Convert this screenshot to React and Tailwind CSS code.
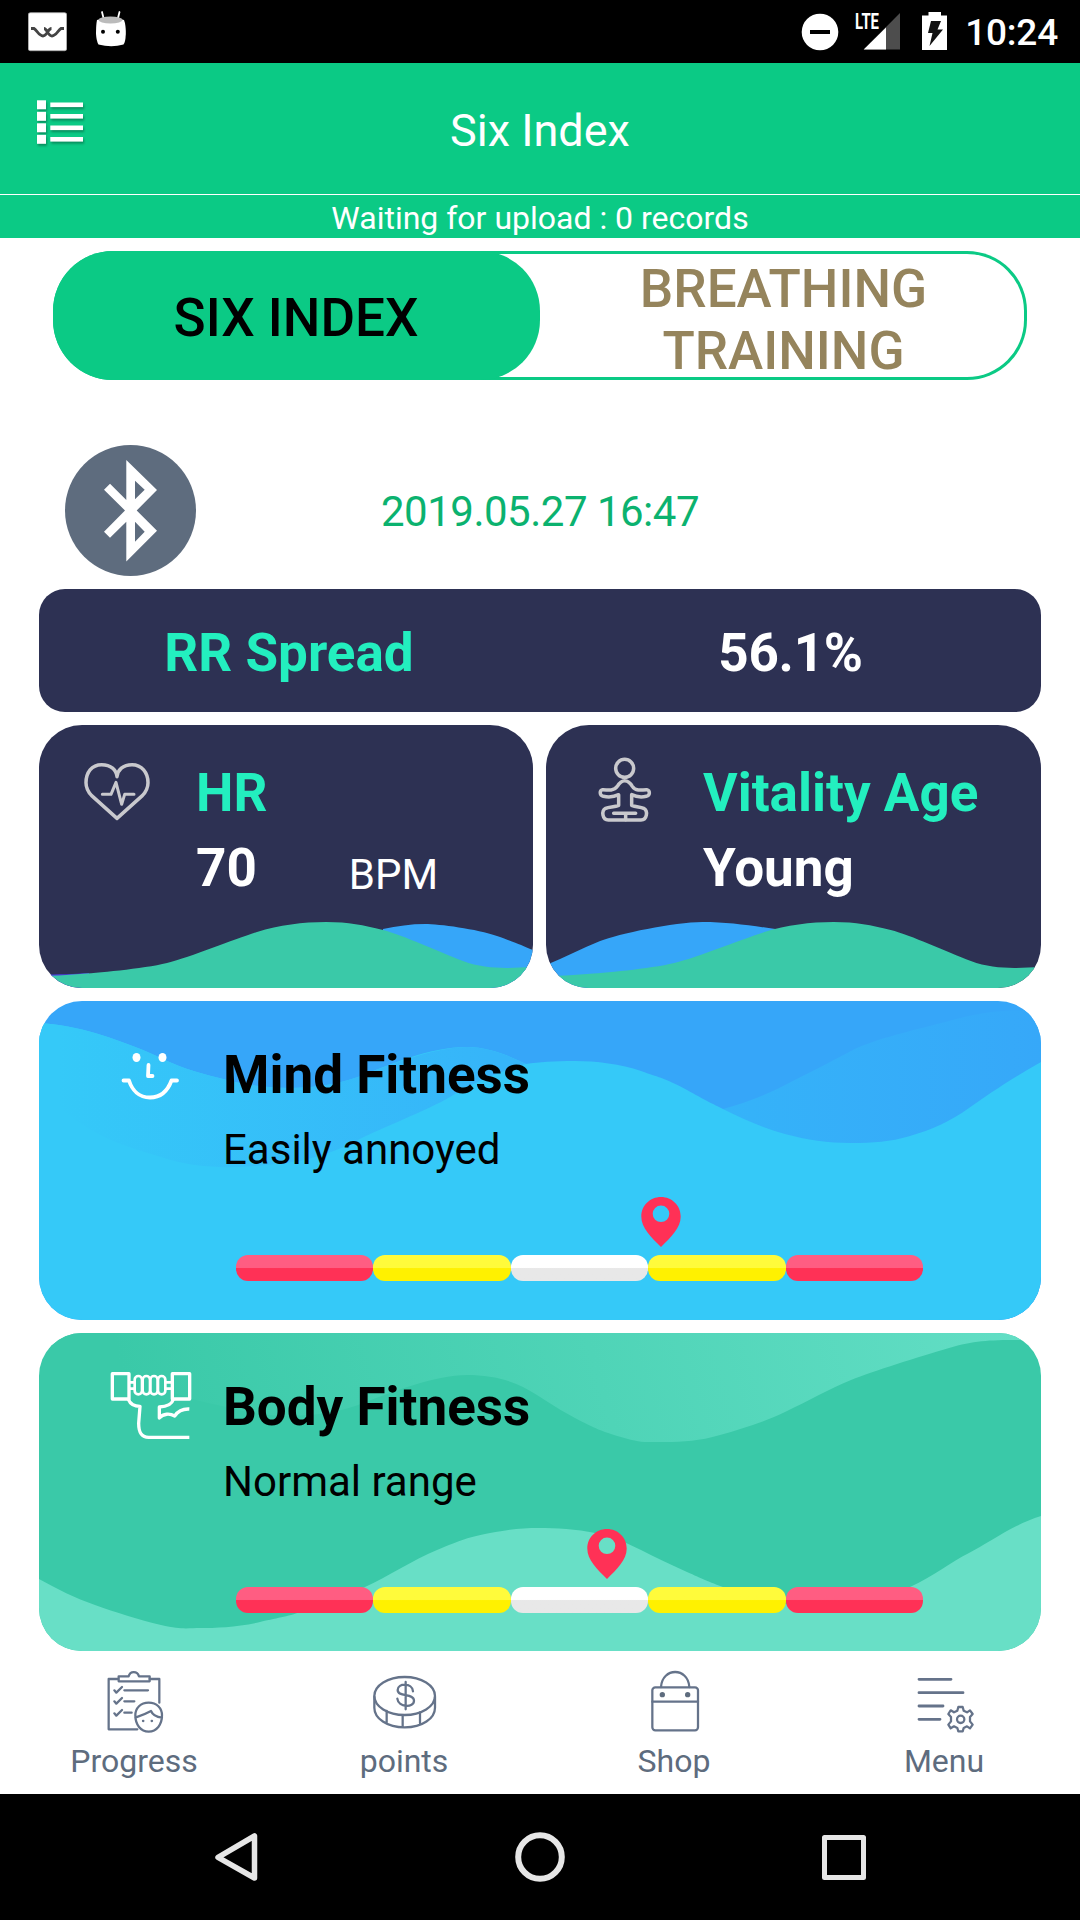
import React from "react";

function StatusBar() {
  return (
    <div className="flex h-[63px] items-center bg-black text-white">
      <svg className="ml-[28px] h-[63px] w-[39px] shrink-0" viewBox="28 0 39 63">
        <rect x="28.3" y="12.7" width="38.4" height="38" rx="2" fill="#fff" stroke="#aaa" strokeWidth=".8" />
        <path d="M31 28.5h3c3 2 5 7.500 9 7.500s5-7.500 8.500-7.500M44 28.500c3 0 4 7.500 8 7.500s6-5.500 9-7.500h3" fill="none" stroke="#444" strokeWidth="2.800" />
      </svg>
      <svg className="ml-[27px] h-[63px] w-[34px] shrink-0" viewBox="94 0 34 63">
        <path d="M102 12l2 8M119.500 12l-2 8" stroke="#fff" strokeWidth="1.800" strokeLinecap="round" />
        <path d="M97 20q14-5 27 0q2 5 1.800 14q-.3 8-2.300 10.500q-12 3.500-25 0q-2-3-2.500-10.500q0-9 1-14z" fill="#fff" />
        <ellipse cx="110.500" cy="20" rx="12" ry="3.400" fill="#bbb" />
        <circle cx="103" cy="31.700" r="2" fill="#000" />
        <circle cx="117.800" cy="31.700" r="2" fill="#000" />
      </svg>
      <div className="grow" />
      <svg className="h-[63px] w-[38px] shrink-0" viewBox="801 0 38 63">
        <circle cx="820" cy="32" r="18.300" fill="#fff" />
        <rect x="810" y="30" width="20" height="4" fill="#000" />
      </svg>
      <svg className="ml-[14px] h-[63px] w-[50px] shrink-0" viewBox="853 0 50 63">
        <path d="M900 13V49.500H863.700z" fill="#4d4d4d" />
        <path d="M886 27.500V49.500H863.700z" fill="#fff" />
        <text x="855" y="29" fontFamily="Roboto" fontWeight="700" fontSize="21.500" textLength="24" lengthAdjust="spacingAndGlyphs" fill="#fff">LTE</text>
      </svg>
      <svg className="ml-[18px] h-[63px] w-[27px] shrink-0" viewBox="921 0 27 63">
        <path d="M922 15.500h6.500v-3.500h12.500v3.500h6V50h-25z" fill="#fff" />
        <path d="M931 21h10l-3.500 8.500h5.500L929.500 46l3-13H928z" fill="#111" />
      </svg>
      <span className="ml-[17px] mr-[22px] mt-[2px] text-[37px] font-medium leading-none tracking-[-0.2px]">10:24</span>
    </div>
  );
}

function Header() {
  return (
    <div className="bg-[#0bca85] text-white">
      <div className="grid h-[131px] grid-cols-[1fr_auto_1fr] items-start">
        <svg className="ml-[34px] mt-[34px] h-[52px] w-[54px] drop-shadow-[1px_2px_1px_rgba(0,0,0,0.3)]" viewBox="34 97 54 52">
          {[100.3, 111.8, 123.3, 134.8].map((y) => (
            <g key={y} fill="#fff">
              <rect x="37" y={y} width="9" height="9" />
              <rect x="50.300" y={y + 2.200} width="32.700" height="4.600" />
            </g>
          ))}
        </svg>
        <h1 className="mt-[41px] text-[45px] leading-[54px]">Six Index</h1>
      </div>
      <div className="h-[44px] border-t border-white text-center text-[32px] leading-[47px]">Waiting for upload : 0 records</div>
    </div>
  );
}

function Toggle() {
  return (
    <div className="mx-[53px] mt-[13px] flex h-[129px] rounded-[60px] bg-white text-center text-[53px] font-medium shadow-[inset_0_0_0_3px_#0bca85]">
      <div className="w-[487px] rounded-[60px] bg-[#0bca85] pt-[1px] pr-[1px] leading-[132px] text-black">SIX INDEX</div>
      <div className="w-[487px] pt-[7px] leading-[62px] text-[#95845c]">
        BREATHING
        <br />
        TRAINING
      </div>
    </div>
  );
}

function DeviceRow() {
  return (
    <div className="mt-[65px] grid h-[131px] grid-cols-[1fr_auto_1fr] items-center px-[65px]">
      <svg className="h-[131px] w-[131px]" viewBox="0 0 131 131">
        <circle cx="65.500" cy="65.500" r="65.500" fill="#5e6c7e" />
        <path
          fillRule="evenodd"
          fill="#fff"
          d="M61.300 15L92 45L71.700 65.500L92 85.700L61.300 116.500V76.700L45 92.700L39 86.700L60 65.500L39 44.700L45 38.700L61.300 55zM70 35.700V54.300L79.700 44.700zM70 76.700V96.700L79.700 86.700z"
        />
      </svg>
      <span className="mt-[3px] text-[42px] leading-[50px] tracking-[-0.5px] text-[#0bb26f]">2019.05.27 16:47</span>
    </div>
  );
}

const GREEN_WAVE = "M0 251C13 251 27 250 41 249S104 244 128 238S196 214 218 207S264 197 287 197S324 200 344 205S400 227 424 236S470 243 495 242V263H0z";

function HeartIcon() {
  return (
    <svg className="h-[60px] w-[70px]" viewBox="155 137 210 180" fill="none" stroke="#c9c9cd" strokeWidth="10.500" strokeLinecap="round" strokeLinejoin="round">
      <path d="M260 184C258 164 242 148 214 148C184 148 167 172 167 202C167 218 173 229 184 241L260 309L336 241C347 229 353 218 353 202C353 172 334 148 305 148C278 148 262 164 260 184" />
      <path d="M216 237H242L257 201L274 267L283 237H311" strokeWidth="9" />
    </svg>
  );
}

function MeditateIcon() {
  return (
    <svg className="h-[70px] w-[56px]" viewBox="171 119 168 210" fill="none" stroke="#c9c9cd" strokeWidth="10.500" strokeLinecap="round" strokeLinejoin="round">
      <ellipse cx="254" cy="159" rx="27" ry="27" />
      <path d="M236 238C220 246 204 246 190 243C178 240 178 226 188 223C206 225 222 227 232 213C239 201 244 196 254 196S270 201 277 213C286 227 302 225 320 223C331 226 331 240 319 243C305 246 291 246 275 238V270C288 276 300 274 311 279C325 287 321 314 303 314H205C187 314 183 287 197 279C208 274 224 276 236 270z" />
      <path d="M221 294H287M257 294V313" />
    </svg>
  );
}

function MetricCard({ icon, title, value, unit, width, iconClass, children }) {
  return (
    <div className={`relative h-[263px] overflow-hidden rounded-[43px] bg-[#2d3153] ${width}`}>
      <svg className="absolute inset-0 h-full w-full" viewBox="0 0 494 263" preserveAspectRatio="none">
        {children}
      </svg>
      <div className="relative flex">
        <div className={`w-[157px] shrink-0 ${iconClass}`}>{icon}</div>
        <div className="pt-[36px] text-[53px] font-bold leading-[64px]">
          <div className="text-[#23efbf]">{title}</div>
          <div className="mt-[11px] flex text-white">
            {value}
            {unit && <span className="ml-[92px] mt-[7px] text-[42px] font-normal">{unit}</span>}
          </div>
        </div>
      </div>
    </div>
  );
}

const SEGMENTS = [
  "from-[#ff5d82] to-[#ff3156]",
  "from-[#fffb3b] to-[#fff100]",
  "from-white to-[#e8e8e8]",
  "from-[#fffb3b] to-[#fff100]",
  "from-[#ff5d82] to-[#ff3156]",
];

function Gauge({ position }) {
  return (
    <div className="relative ml-[197px] mr-[118px] flex">
      <svg className="absolute -top-[58px] h-[50px] w-[40px] -translate-x-1/2" style={{ left: position }} viewBox="0 0 40 50">
        <path fillRule="evenodd" fill="#ff3156" d="M20 0C9 0 .3 8.500 .3 19.500C.3 31 10 40 20 50C30 40 39.700 31 39.700 19.500C39.700 8.500 31 0 20 0zM20 8.500a8.300 8.300 0 1 1 0 16.600a8.300 8.300 0 1 1 0-16.600z" />
      </svg>
      {SEGMENTS.map((colours, i) => (
        <div key={i} className={`h-[26px] grow basis-0 rounded-[12px] bg-linear-to-b from-[48%] to-[52%] ${colours}`} />
      ))}
    </div>
  );
}

function FitnessCard({ title, text, position, icon, base, height, children }) {
  return (
    <div className={`relative w-full overflow-hidden rounded-[43px] ${base} ${height}`}>
      <svg className="absolute inset-0 h-[319px] w-full" viewBox="0 0 1002 319" preserveAspectRatio="none">
        {children}
      </svg>
      <div className="relative flex h-[254px]">
        <div className="w-[184px] shrink-0 pl-[51px] pt-[27px]">{icon}</div>
        <div className="pt-[42px] text-black">
          <div className="text-[53px] font-bold leading-[64px]">{title}</div>
          <div className="mt-[11px] text-[42px] leading-[64px]">{text}</div>
        </div>
      </div>
      <Gauge position={position} />
    </div>
  );
}

function SmileIcon() {
  return (
    <svg className="h-[90px] w-[120px]" viewBox="90 1028 120 90" fill="none" stroke="#fff" strokeWidth="3.800" strokeLinecap="round" strokeLinejoin="round">
      <ellipse cx="136.500" cy="1057.500" rx="4" ry="4.500" fill="#fff" stroke="none" />
      <ellipse cx="162.500" cy="1057.500" rx="4" ry="4.500" fill="#fff" stroke="none" />
      <path d="M148.500 1065L148 1076H152.500" />
      <path d="M123.500 1080.500H129C132 1090 139 1097.500 150 1097.500S168 1090 171.500 1080.500H177" />
    </svg>
  );
}

function DumbbellIcon() {
  return (
    <svg className="h-[90px] w-[140px]" viewBox="0 0 420 270" fill="none" stroke="#fff" strokeWidth="10" strokeLinejoin="round">
      <path d="M67 41H117V117H67zM247 41H299V117H247z" />
      <path d="M118 67H133M118 86H133M228 67H246M228 86H246" strokeWidth="8" />
      <rect x="134" y="48" width="22" height="55" rx="11" strokeWidth="8" />
      <rect x="158" y="48" width="22" height="55" rx="11" strokeWidth="8" />
      <rect x="181" y="48" width="22" height="55" rx="11" strokeWidth="8" />
      <rect x="204" y="48" width="22" height="55" rx="11" strokeWidth="8" />
      <path d="M115 118C120 130 132 139 150 139L146 190C146 215 152 232 176 232H298" />
      <path d="M250 118C246 132 230 140 208 141V174C220 160 240 160 254 168C266 150 280 146 298 147" />
    </svg>
  );
}

const NAV = [
  {
    label: "Progress",
    viewBox: "129 60 192 192",
    icon: (
      <>
        <path d="M174 87H146V238H232M269 87H298V158" />
        <path d="M176 79H206C210 62 232 62 237 79H269V94H176z" />
        <path d="M193 121H264M193 154H223M193 188H215M163 121L169 128L186 111M163 154L169 161L186 144M163 190L169 197L186 180" />
        <path d="M266 158C242 158 226 174 226 196C226 224 242 245 266 245S306 224 306 196C306 174 290 158 266 158zM226 203Q255 193 273 183Q280 200 306 203" />
        <path d="M249 213h1M275 213h1" strokeWidth="7" />
      </>
    ),
  },
  {
    label: "points",
    viewBox: "938 60 192 192",
    icon: (
      <>
        <ellipse cx="1033" cy="138" rx="91" ry="57" />
        <path d="M942 140V173C942 205 980 232 1033 232S1124 205 1124 173V140M979 183V218M1027 196V231M1079 187V220" />
        <path d="M1058 124C1056 98 1012 98 1012 120C1012 143 1061 128 1061 152C1061 174 1014 173 1011 146M1036 96V178" />
      </>
    ),
  },
  {
    label: "Shop",
    viewBox: "126 60 192 192",
    icon: (
      <>
        <rect x="154" y="112" width="137" height="129" rx="9" />
        <path d="M154 155H291M180 111C184 51 261 51 265 111" />
        <circle cx="184" cy="134" r="8" fill="#5e6c7e" stroke="none" />
        <circle cx="260" cy="134" r="8" fill="#5e6c7e" stroke="none" />
      </>
    ),
  },
  {
    label: "Menu",
    viewBox: "939 60 192 192",
    icon: (
      <>
        <path d="M957 88H1053M957 128H1089M957 168H1029M957 208H1020" strokeWidth="8.500" />
        <circle cx="1082" cy="208" r="11" />
        <path d="M1075 171H1088L1091 182L1101 187L1110 181L1118 192L1110 201V214L1118 224L1110 235L1101 229L1091 234L1088 244H1075L1072 234L1062 229L1052 235L1045 224L1053 214V201L1045 192L1052 181L1062 187L1072 182z" />
      </>
    ),
  },
];

function TabBar() {
  return (
    <div className="grid h-[143px] grid-cols-4 bg-white pt-[19px] text-[#5e6c7e]">
      {NAV.map((item) => (
        <div key={item.label} className="flex flex-col items-center">
          <svg className="h-[64px] w-[64px]" viewBox={item.viewBox} fill="none" stroke="#65738a" strokeWidth="6.800" strokeLinecap="round" strokeLinejoin="round">
            {item.icon}
          </svg>
          <span className="mt-[9px] pr-[2px] text-[32px] leading-[36px]">{item.label}</span>
        </div>
      ))}
    </div>
  );
}

function SystemNav() {
  return (
    <div className="flex h-[126px] items-center justify-between bg-black px-[212px]">
      <svg className="h-[56px] w-[48px]" viewBox="0 0 48 56" fill="none" stroke="#e6e6e6" strokeWidth="5.500" strokeLinejoin="round">
        <path d="M42.500 7V49L6 28.300z" />
      </svg>
      <svg className="h-[56px] w-[56px]" viewBox="0 0 56 56" fill="none" stroke="#e6e6e6" strokeWidth="6">
        <circle cx="28" cy="28" r="21.800" />
      </svg>
      <svg className="h-[56px] w-[48px]" viewBox="0 0 48 56" fill="none" stroke="#e6e6e6" strokeWidth="5" strokeLinejoin="round">
        <rect x="4.500" y="8.500" width="39" height="40" />
      </svg>
    </div>
  );
}

export default function App() {
  return (
    <div className="flex h-[1920px] w-[1080px] flex-col overflow-hidden bg-white font-['Roboto',sans-serif]">
      <StatusBar />
      <Header />
      <Toggle />
      <DeviceRow />
      <div className="mt-[13px] flex flex-col gap-[13px] px-[39px]">
        <div className="grid h-[123px] grid-cols-2 rounded-[26px] bg-[#2d3153] text-center text-[53px] font-bold leading-[128px]">
          <span className="pr-[1px] text-[#23efbf]">RR Spread</span>
          <span className="tracking-[-0.3px] text-white">56.1%</span>
        </div>
        <div className="flex gap-[13px]">
          <MetricCard title="HR" value="70" unit="BPM" width="w-[494px]" icon={<HeartIcon />} iconClass="pl-[43px] pt-[36px]">
            <path d="M0 249.500C20 249.500 35 249 50 248V263H0z" fill="#4b3fe0" />
            <path d="M344 204C358 201 372 199 386 199S438 204 458 211S482 220 494 225V263H344z" fill="#36a6f9" />
            <path d={GREEN_WAVE} fill="#3ac9a8" />
          </MetricCard>
          <MetricCard title="Vitality Age" value="Young" width="w-[495px]" icon={<MeditateIcon />} iconClass="pl-[51px] pt-[30px]">
            <path d="M0 240C18 233 36 223 54 216S128 197 156 197S207 201 236 205L300 263H0z" fill="#36a6f9" />
            <path d={GREEN_WAVE} fill="#3ac9a8" />
          </MetricCard>
        </div>
        <FitnessCard title="Mind Fitness" text="Easily annoyed" position="424.5px" icon={<SmileIcon />} base="bg-[#36a6f9]" height="h-[319px]">
          <defs>
            <linearGradient id="mindLeft" gradientUnits="userSpaceOnUse" x1="20" x2="450" y1="0" y2="0">
              <stop stopColor="#35c9f8" />
              <stop offset="1" stopColor="#36b5f9" />
            </linearGradient>
            <linearGradient id="mindRight" gradientUnits="userSpaceOnUse" x1="684" x2="1002" y1="0" y2="0">
              <stop stopColor="#35b3f9" />
              <stop offset="1" stopColor="#36a8f9" />
            </linearGradient>
          </defs>
          <path d="M684 108C705 102 725 95 746 84S790 62 812 50S880 28 910 20S955 9 1002 9V319H684z" fill="url(#mindRight)" />
          <path d="M0 22C18 23 40 27 56 32S97 45 122 57S164 73 188 79C230 90 280 90 319 76C350 64 390 46 428 46C450 46 470 55 487 63C500 61 515 60 536 60S582 63 602 70S628 78 648 89S662 97 684 108S724 127 746 133S789 142 812 142S850 141 871 135S912 120 930 107S975 76 1002 61V319H0z" fill="#35c9f8" />
          <path d="M0 22C18 23 40 27 56 32S97 45 122 57S164 73 188 79C230 90 280 90 319 76C350 64 396 46 428 46C450 46 470 55 487 63C455 72 433 83 411 96S340 128 319 139S275 158 253 161S205 167 181 166S145 163 122 156S75 142 56 131S22 110 0 86z" fill="url(#mindLeft)" />
        </FitnessCard>
        <FitnessCard title="Body Fitness" text="Normal range" position="370.5px" icon={<DumbbellIcon />} base="bg-[#3ac9a8]" height="h-[318px]">
          <defs>
            <linearGradient id="bodyTop" gradientUnits="userSpaceOnUse" x1="90" x2="960" y1="60" y2="-200">
              <stop stopColor="#3ac9a8" />
              <stop offset="1" stopColor="#64dfc6" />
            </linearGradient>
          </defs>
          <path d="M0 0V15C60 20 110 60 188 74C230 86 280 86 319 72C350 60 396 42 428 42C450 42 468 46 484 54S515 74 536 85S562 98 582 104S605 109 625 109S660 108 681 102S723 90 746 79S790 56 812 47S880 24 910 15S955 7 1002 7V0z" fill="url(#bodyTop)" />
          <path d="M0 246C18 256 36 265 56 272S100 287 122 292S148 295 162 295S200 294 221 289S248 284 267 277S304 264 326 254S374 227 398 217S430 204 451 200S484 195 500 195S538 196 556 200S588 210 602 217S632 232 648 239S665 247 684 254S745 274 778 274S847 265 871 254S912 229 930 220S975 191 1002 183V319H0z" fill="#68dfc6" />
        </FitnessCard>
      </div>
      <TabBar />
      <SystemNav />
    </div>
  );
}
